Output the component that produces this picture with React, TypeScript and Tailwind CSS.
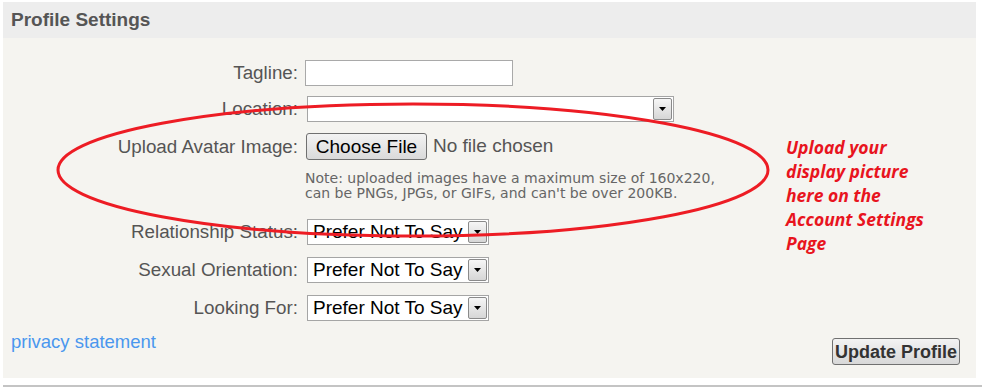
import React from "react"

const labelCls = "w-[295px] shrink-0 text-right text-[18.8px] leading-[22px] text-[#555]"

function FakeSelect({ value, width }: { value: string; width: string }) {
  return (
    <div className={`flex h-[26px] items-stretch border border-[#a5a5a5] bg-white ${width}`}>
      <div className="flex-1 overflow-hidden whitespace-nowrap pl-[5px] text-[19px] leading-[24px] text-black">
        {value}
      </div>
      <div className="m-px flex w-[19px] items-center justify-center rounded-[2px] border border-[#8a8a8a] bg-gradient-to-b from-[#f6f6f6] to-[#d6d6d6]">
        <svg width="7" height="4" viewBox="0 0 7 4">
          <path d="M0 0h7L3.5 4z" fill="#000" />
        </svg>
      </div>
    </div>
  )
}

export default function App() {
  return (
    <div className="relative min-h-[387px] bg-white font-['Liberation_Sans',Arial,sans-serif]">
      <div className="ml-[3px] w-[973px] pt-[2px]">
        {/* header */}
        <div className="flex h-[36px] items-center bg-[#ededed] pl-[8px] text-[19px] font-bold text-[#555]">
          Profile Settings
        </div>

        {/* body */}
        <div className="h-[340px] bg-[#f5f4f0] pt-[22px]">
          <div className="flex h-[26px] items-center">
            <span className={labelCls}>Tagline:</span>
            <div className="ml-[7px] h-[26px] w-[208px] border border-[#a9a9a9] bg-white" />
          </div>

          <div className="mt-[10px] flex h-[26px] items-center">
            <span className={labelCls}>Location:</span>
            <div className="ml-[9px]">
              <FakeSelect value="" width="w-[367px]" />
            </div>
          </div>

          <div className="mt-[11px] flex h-[27px] items-center">
            <span className={labelCls}>Upload Avatar Image:</span>
            <button className="ml-[8px] h-[27px] w-[121px] rounded-[3px] border border-[#707070] bg-gradient-to-b from-[#f3f3f3] to-[#dadada] text-[19px] leading-[24px] text-black">
              Choose File
            </button>
            <span className="ml-[6px] text-[19px] text-[#555]">No file chosen</span>
          </div>

          <div className="mt-[11px] pl-[302px] font-['DejaVu_Sans',Verdana,sans-serif] text-[14px] leading-[15px] text-[#666]">
            Note: uploaded images have a maximum size of 160x220,
            <br />
            can be PNGs, JPGs, or GIFs, and can't be over 200KB.
          </div>

          <div className="mt-[18px] flex h-[26px] items-center">
            <span className={labelCls}>Relationship Status:</span>
            <div className="ml-[9px]">
              <FakeSelect value="Prefer Not To Say" width="w-[182px]" />
            </div>
          </div>

          <div className="mt-[12px] flex h-[26px] items-center">
            <span className={labelCls}>Sexual Orientation:</span>
            <div className="ml-[9px]">
              <FakeSelect value="Prefer Not To Say" width="w-[182px]" />
            </div>
          </div>

          <div className="mt-[12px] flex h-[26px] items-center">
            <span className={labelCls}>Looking For:</span>
            <div className="ml-[9px]">
              <FakeSelect value="Prefer Not To Say" width="w-[182px]" />
            </div>
          </div>

          <div className="mt-[11px] flex items-start justify-between pl-[8px] pr-[16px]">
            <a className="text-[18.5px] leading-[20px] text-[#4a97ee]">privacy statement</a>
            <button className="mt-[6px] h-[27px] w-[128px] rounded-[3px] border border-[#707070] bg-gradient-to-b from-[#f3f3f3] to-[#d8d8d8] text-[18px] font-bold leading-[22px] text-[#333]">
              Update Profile
            </button>
          </div>
        </div>
      </div>
      <div className="ml-[3px] mt-[7px] h-[2px] bg-[#c4c4c4]" />

      {/* red annotation drawn over the page */}
      <svg className="pointer-events-none absolute left-0 top-0" width="982" height="387">
        <ellipse cx="413" cy="170" rx="355" ry="66" fill="none" stroke="#ed1c24" strokeWidth="3" />
      </svg>
      <div className="pointer-events-none absolute left-[786px] top-[135px] font-['Open_Sans',sans-serif] text-[17.5px] font-bold italic leading-[24px] text-[#e8141e]">
        <div>Upload your</div>
        <div>display picture</div>
        <div>here on the</div>
        <div>Account Settings</div>
        <div>Page</div>
      </div>
    </div>
  )
}
